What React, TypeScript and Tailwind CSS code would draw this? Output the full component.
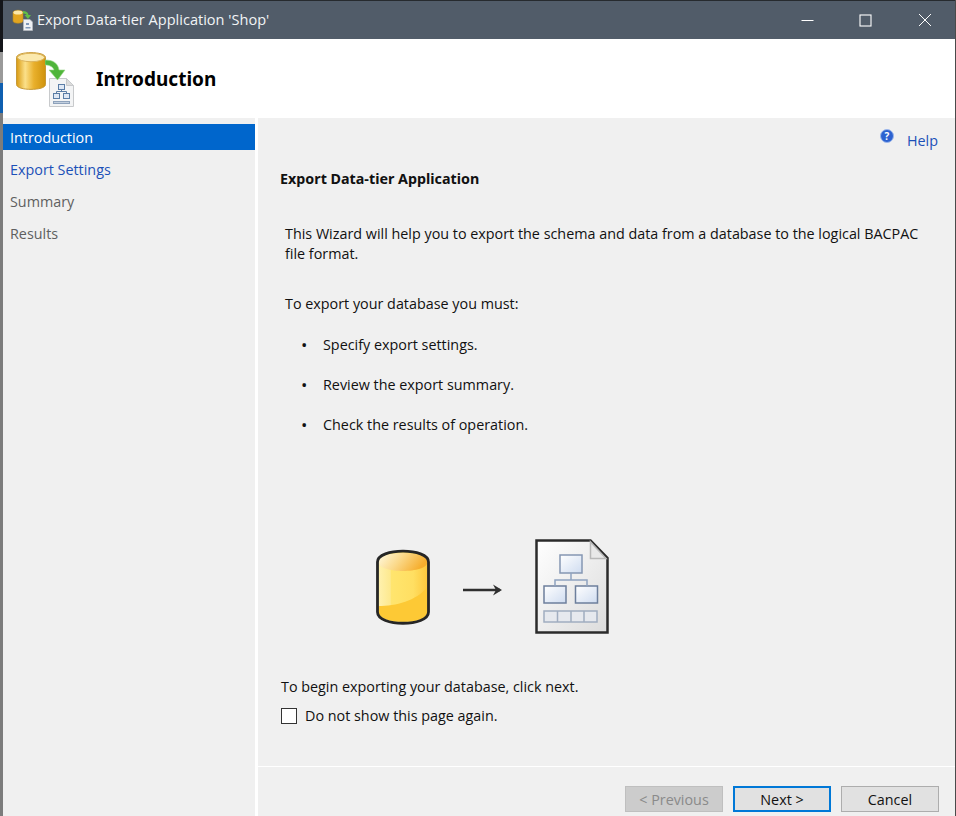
import React from "react";

function TitleIcon() {
  return (
    <svg width="22" height="22" viewBox="0 0 22 22">
      <path d="M1 3.5C1 .5 11 .5 11 3.5V12C11 15 1 15 1 12z" fill="#e2a520" stroke="#b98a20" strokeWidth="0.6" />
      <ellipse cx="6" cy="3.5" rx="4.6" ry="2" fill="#fbe7a8" />
      <path d="M11 2c3 0 5 1 5.5 4H19l-3 4-3.5-4H14.5c-.5-1-2-1.5-3.5-1.5z" fill="#63bd45" />
      <path d="M11.5 10.5H18l2.5 2.5v8.5h-9z" fill="#eef0f3" stroke="#b5b9bf" strokeWidth="0.7" />
      <path d="M14 14h3v2h-3zM13.5 18h5v1.5h-5z" fill="#7f97b8" />
    </svg>
  );
}

function HeaderDb() {
  return (
    <svg width="30" height="38" viewBox="0 0 30 38">
      <defs>
        <linearGradient id="dbSmall" x1="0" x2="1" y1="0" y2="0">
          <stop offset="0" stopColor="#d99a10" />
          <stop offset="0.3" stopColor="#fbe08a" />
          <stop offset="0.6" stopColor="#e9b02c" />
          <stop offset="1" stopColor="#cf930c" />
        </linearGradient>
      </defs>
      <path d="M.5 5.5c0-6.500 29-6.500 29 0v27c0 6.500-29 6.500-29 0z" fill="url(#dbSmall)" stroke="#c79a38" strokeWidth="1" />
      <ellipse cx="15" cy="5.500" rx="13.500" ry="4.200" fill="#fbe9ad" stroke="#dcb45a" strokeWidth="1" />
    </svg>
  );
}

function HeaderDoc() {
  return (
    <svg width="25" height="29" viewBox="0 0 25 29">
      <path d="M.5.5h17l7 7v21H.5z" fill="#f3f4f5" stroke="#c8cacc" strokeWidth="1" />
      <path d="M17.500.5v7h7z" fill="#dcdcdc" stroke="#c8cacc" strokeWidth="1" />
      <rect x="9.500" y="6.500" width="6" height="5" fill="#dfe8f4" stroke="#5a7da6" />
      <rect x="4.500" y="15.500" width="6" height="5" fill="#dfe8f4" stroke="#5a7da6" />
      <rect x="14.500" y="15.500" width="6" height="5" fill="#dfe8f4" stroke="#5a7da6" />
      <path d="M12.500 11.500v2M7.500 15.500v-2h10v2" fill="none" stroke="#5a7da6" />
      <rect x="4.500" y="23.500" width="16" height="2" fill="#c2cfdf" stroke="#8ea2bb" />
    </svg>
  );
}

function BigDoc() {
  return (
    <svg width="74" height="95" viewBox="0 0 74 95">
      <defs>
        <linearGradient id="docBg" x1="0" x2="1" y1="0" y2="1">
          <stop offset="0" stopColor="#ffffff" />
          <stop offset="1" stopColor="#dcdcdc" />
        </linearGradient>
        <linearGradient id="boxBg" x1="0" x2="1" y1="0" y2="1">
          <stop offset="0" stopColor="#ffffff" />
          <stop offset="1" stopColor="#cfdcf0" />
        </linearGradient>
      </defs>
      <path d="M1.500 1.500H55.500L72.500 19V93.500H1.500z" fill="url(#docBg)" stroke="#2b2b2b" strokeWidth="2.500" />
      <path d="M55.500 3V19.500H71z" fill="#e8e8e8" stroke="#b8b8b8" strokeWidth="1.500" />
      <rect x="25" y="16" width="22" height="18" fill="url(#boxBg)" stroke="#8597b3" strokeWidth="1.500" />
      <rect x="9" y="47" width="22" height="17" fill="url(#boxBg)" stroke="#6d7f9c" strokeWidth="1.500" />
      <rect x="40.500" y="47" width="22" height="17" fill="url(#boxBg)" stroke="#6d7f9c" strokeWidth="1.500" />
      <path d="M36 34v7M20 47v-6h32v6" fill="none" stroke="#8fa3c0" strokeWidth="1.500" />
      <rect x="9" y="72" width="53" height="11" fill="#e6e9ee" stroke="#a0adc0" strokeWidth="1.500" />
      <path d="M22.500 72v11M36 72v11M49 72v11" stroke="#a0adc0" strokeWidth="1.500" />
    </svg>
  );
}

function BigDb() {
  return (
    <svg width="54" height="76" viewBox="0 0 54 76">
      <defs>
        <linearGradient id="dbTop" x1="0" x2="1" y1="0" y2="0.3">
          <stop offset="0" stopColor="#fffbe2" />
          <stop offset="0.5" stopColor="#fbd98a" />
          <stop offset="1" stopColor="#f6ae2e" />
        </linearGradient>
        <linearGradient id="dbBody" x1="0" x2="1" y1="0" y2="0">
          <stop offset="0" stopColor="#fff2b2" />
          <stop offset="0.25" stopColor="#fde98f" />
          <stop offset="0.27" stopColor="#ffe56e" />
          <stop offset="0.7" stopColor="#ffdf62" />
          <stop offset="1" stopColor="#fcc63a" />
        </linearGradient>
      </defs>
      <path d="M1.500 13C1.500-1.500 52.500-1.500 52.500 13V63C52.500 78 1.500 78 1.500 63z" fill="url(#dbBody)" />
      <path d="M2.500 57C20 57 40 52 51.500 38V63C51.500 76 2.500 76 2.500 63z" fill="#fdc935" />
      <path d="M2.500 13c0 12 49 12 49 0s-49-12-49 0z" fill="url(#dbTop)" />
      <path d="M1.500 13C1.500-1.500 52.500-1.500 52.500 13V63C52.500 78 1.500 78 1.500 63z" fill="none" stroke="#262626" strokeWidth="2.800" />
    </svg>
  );
}

const bullets = ["Specify export settings.", "Review the export summary.", "Check the results of operation."];

export default function App() {
  return (
    <div className="w-[956px] h-[816px] overflow-hidden flex bg-[#262a2e] font-['Open_Sans','Noto_Sans',sans-serif] text-[14.35px] text-[#111]">
      <div className="w-[3px] shrink-0 flex flex-col">
        <div className="h-[52px] bg-[#14161a]" />
        <div className="h-[31px] bg-[#9a9a9a]" />
        <div className="h-[30px] bg-[#0f5fb0]" />
        <div className="flex-1 bg-[#7c7c7c]" />
      </div>

      <div className="w-[952px] shrink-0 flex flex-col">
        {/* title bar */}
        <div className="mt-px h-[38px] shrink-0 bg-[#515c69] flex items-center text-[#f2f4f6]">
          <div className="ml-[9px] w-[23px] flex items-center">
            <TitleIcon />
          </div>
          <span className="ml-[2px] text-[14.55px]">Export Data-tier Application 'Shop'</span>
          <div className="ml-auto flex items-center text-white">
            <svg className="mr-[45px]" width="13" height="13" viewBox="0 0 13 13">
              <path d="M0.500 6.500H12.500" stroke="currentColor" strokeWidth="1" />
            </svg>
            <svg className="mr-[46px]" width="13" height="13" viewBox="0 0 13 13">
              <rect x="1" y="1" width="11" height="11" fill="none" stroke="currentColor" strokeWidth="1.100" />
            </svg>
            <svg className="mr-[23px]" width="14" height="14" viewBox="0 0 14 14">
              <path d="M1 1L13 13M13 1L1 13" fill="none" stroke="currentColor" strokeWidth="1" />
            </svg>
          </div>
        </div>

        {/* header */}
        <div className="h-[79px] shrink-0 bg-white flex items-center">
          <div className="relative ml-[13px] w-[80px] h-[60px]">
            <div className="absolute left-0 top-[3px]"><HeaderDb /></div>
            <div className="absolute left-[33px] top-[29px]"><HeaderDoc /></div>
            <svg className="absolute left-[29px] top-[10px]" width="22" height="24" viewBox="0 0 22 24">
              <path d="M0 1c8 0 13 3 14 10h6l-7.500 10-8.500-10h5c-1-3-4-5-9-5z" fill="#4fb53a" stroke="#9ad98a" strokeWidth="0.600" />
            </svg>
          </div>
          <span className="mt-[2px] font-['Noto_Sans',sans-serif] font-bold text-[19px] text-black">Introduction</span>
        </div>

        <div className="flex-1 flex bg-white min-h-0">
          {/* sidebar */}
          <div className="w-[252px] shrink-0 bg-[#f0f0f0] pt-[6px]">
            <div className="h-[26px] bg-[#0066cc] text-white pl-[7px] pt-[2px] flex items-center">Introduction</div>
            <div className="h-[32px] pl-[7px] pt-[2px] mt-[3px] flex items-center text-[#1c50b8]">Export Settings</div>
            <div className="h-[32px] pl-[7px] pt-[2px] flex items-center text-[#5f5f5f]">Summary</div>
            <div className="h-[32px] pl-[7px] pt-[2px] flex items-center text-[#5f5f5f]">Results</div>
          </div>

          {/* main */}
          <div className="ml-[3px] flex-1 flex flex-col bg-[#f0f0f0] min-w-0">
            <div className="flex-1 relative px-[22px] min-h-0">
              <div className="absolute right-[17px] top-[10px] flex items-start text-[#1c50b8]">
                <div className="mt-[1px] w-[14px] h-[14px] rounded-full bg-[#2c62d0] border border-[#9db8ec] text-white text-[10px] font-bold leading-[12px] text-center">?</div>
                <span className="ml-[13px] mt-[2px]">Help</span>
              </div>

              <div className="pt-[51px] font-['Noto_Sans',sans-serif] font-bold text-[14.3px] text-[#111] leading-[20px]">Export Data-tier Application</div>

              <div className="pl-[5px] mt-[35px]">
                <p className="leading-[20px] w-[650px]">This Wizard will help you to export the schema and data from a database to the logical BACPAC file format.</p>
                <p className="mt-[30px] leading-[20px]">To export your database you must:</p>
                <ul className="mt-[21px] flex flex-col gap-[20px]">
                  {bullets.map((b) => (
                    <li key={b} className="flex leading-[20px]">
                      <span className="w-[38px] pl-[16px] text-[17px]">•</span>
                      <span>{b}</span>
                    </li>
                  ))}
                </ul>
              </div>

              <div className="mt-[104px] ml-[96px] flex items-center">
                <BigDb />
                <svg className="ml-[33px] mt-[6px]" width="40" height="14" viewBox="0 0 40 14">
                  <path d="M0 7h37" fill="none" stroke="#2f2f2f" strokeWidth="2.600" />
                  <path d="M30 1.500L39 7l-9 5.500 3-5.500z" fill="#2f2f2f" />
                </svg>
                <div className="ml-[32px]"><BigDoc /></div>
              </div>

              <p className="mt-[43px] ml-px leading-[20px]">To begin exporting your database, click next.</p>
              <label className="mt-[9px] ml-px flex items-center">
                <span className="w-[16px] h-[16px] bg-white border border-[#333]" />
                <span className="ml-[8px] leading-[20px]">Do not show this page again.</span>
              </label>
            </div>

            {/* footer */}
            <div className="h-[50px] shrink-0 border-t border-white flex items-start justify-end pt-[19px] pr-[16px] gap-[10px]">
              <button className="w-[98px] h-[26px] pt-px bg-[#cccccc] border border-[#bfbfbf] text-[#8a8a8a]">&lt; Previous</button>
              <button className="w-[98px] h-[26px] pt-px bg-[#e1e1e1] border-2 border-[#0078d7] text-[#111]">Next &gt;</button>
              <button className="w-[98px] h-[26px] pt-px bg-[#e1e1e1] border border-[#adadad] text-[#111]">Cancel</button>
            </div>
          </div>
        </div>
      </div>
      <div className="flex-1 bg-[#4a4a4a]" />
    </div>
  );
}
